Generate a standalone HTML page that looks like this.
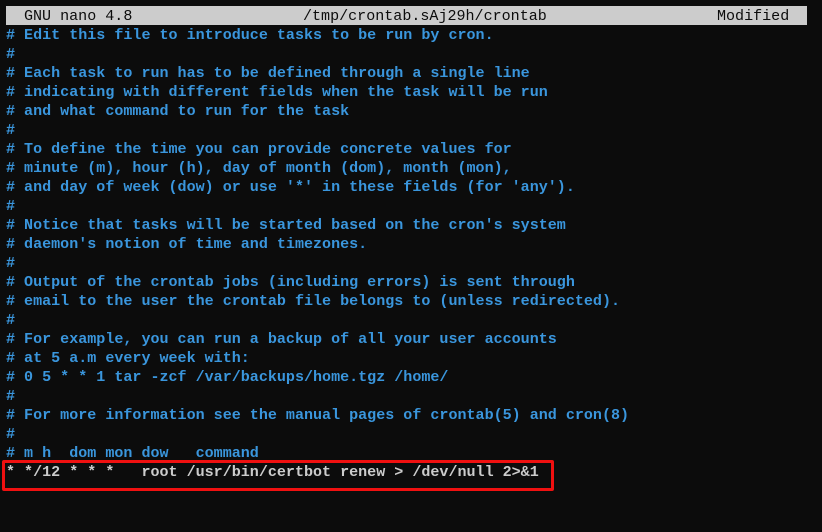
<!DOCTYPE html>
<html><head><meta charset="utf-8"><style>
html,body{margin:0;padding:0;background:#0c0c0c;width:822px;height:532px;overflow:hidden}
.t{position:absolute;left:6px;top:26px;font-family:"Liberation Mono",monospace;font-size:15.05px;line-height:19px;white-space:pre;color:#3a96dd;font-weight:bold}
.h{position:absolute;left:6px;top:6px;width:801px;height:19px;background:#cccccc;color:#0c0c0c;font-family:"Liberation Mono",monospace;font-size:15.05px;line-height:20px;white-space:pre}
.h span{position:absolute;top:0}
.w{color:#cccccc}
.box{position:absolute;left:2px;top:460px;width:546px;height:25px;border:3px solid #f01010;border-radius:2px}
</style></head><body>
<div class="h"><span style="left:18px">GNU nano 4.8</span><span style="left:297px">/tmp/crontab.sAj29h/crontab</span><span style="left:711px">Modified</span></div>
<div class="t"># Edit this file to introduce tasks to be run by cron.
#
# Each task to run has to be defined through a single line
# indicating with different fields when the task will be run
# and what command to run for the task
#
# To define the time you can provide concrete values for
# minute (m), hour (h), day of month (dom), month (mon),
# and day of week (dow) or use '*' in these fields (for 'any').
#
# Notice that tasks will be started based on the cron's system
# daemon's notion of time and timezones.
#
# Output of the crontab jobs (including errors) is sent through
# email to the user the crontab file belongs to (unless redirected).
#
# For example, you can run a backup of all your user accounts
# at 5 a.m every week with:
# 0 5 * * 1 tar -zcf /var/backups/home.tgz /home/
#
# For more information see the manual pages of crontab(5) and cron(8)
#
# m h  dom mon dow   command
<span class="w">* */12 * * *   root /usr/bin/certbot renew &gt; /dev/null 2&gt;&amp;1</span></div>
<div class="box"></div>
</body></html>
